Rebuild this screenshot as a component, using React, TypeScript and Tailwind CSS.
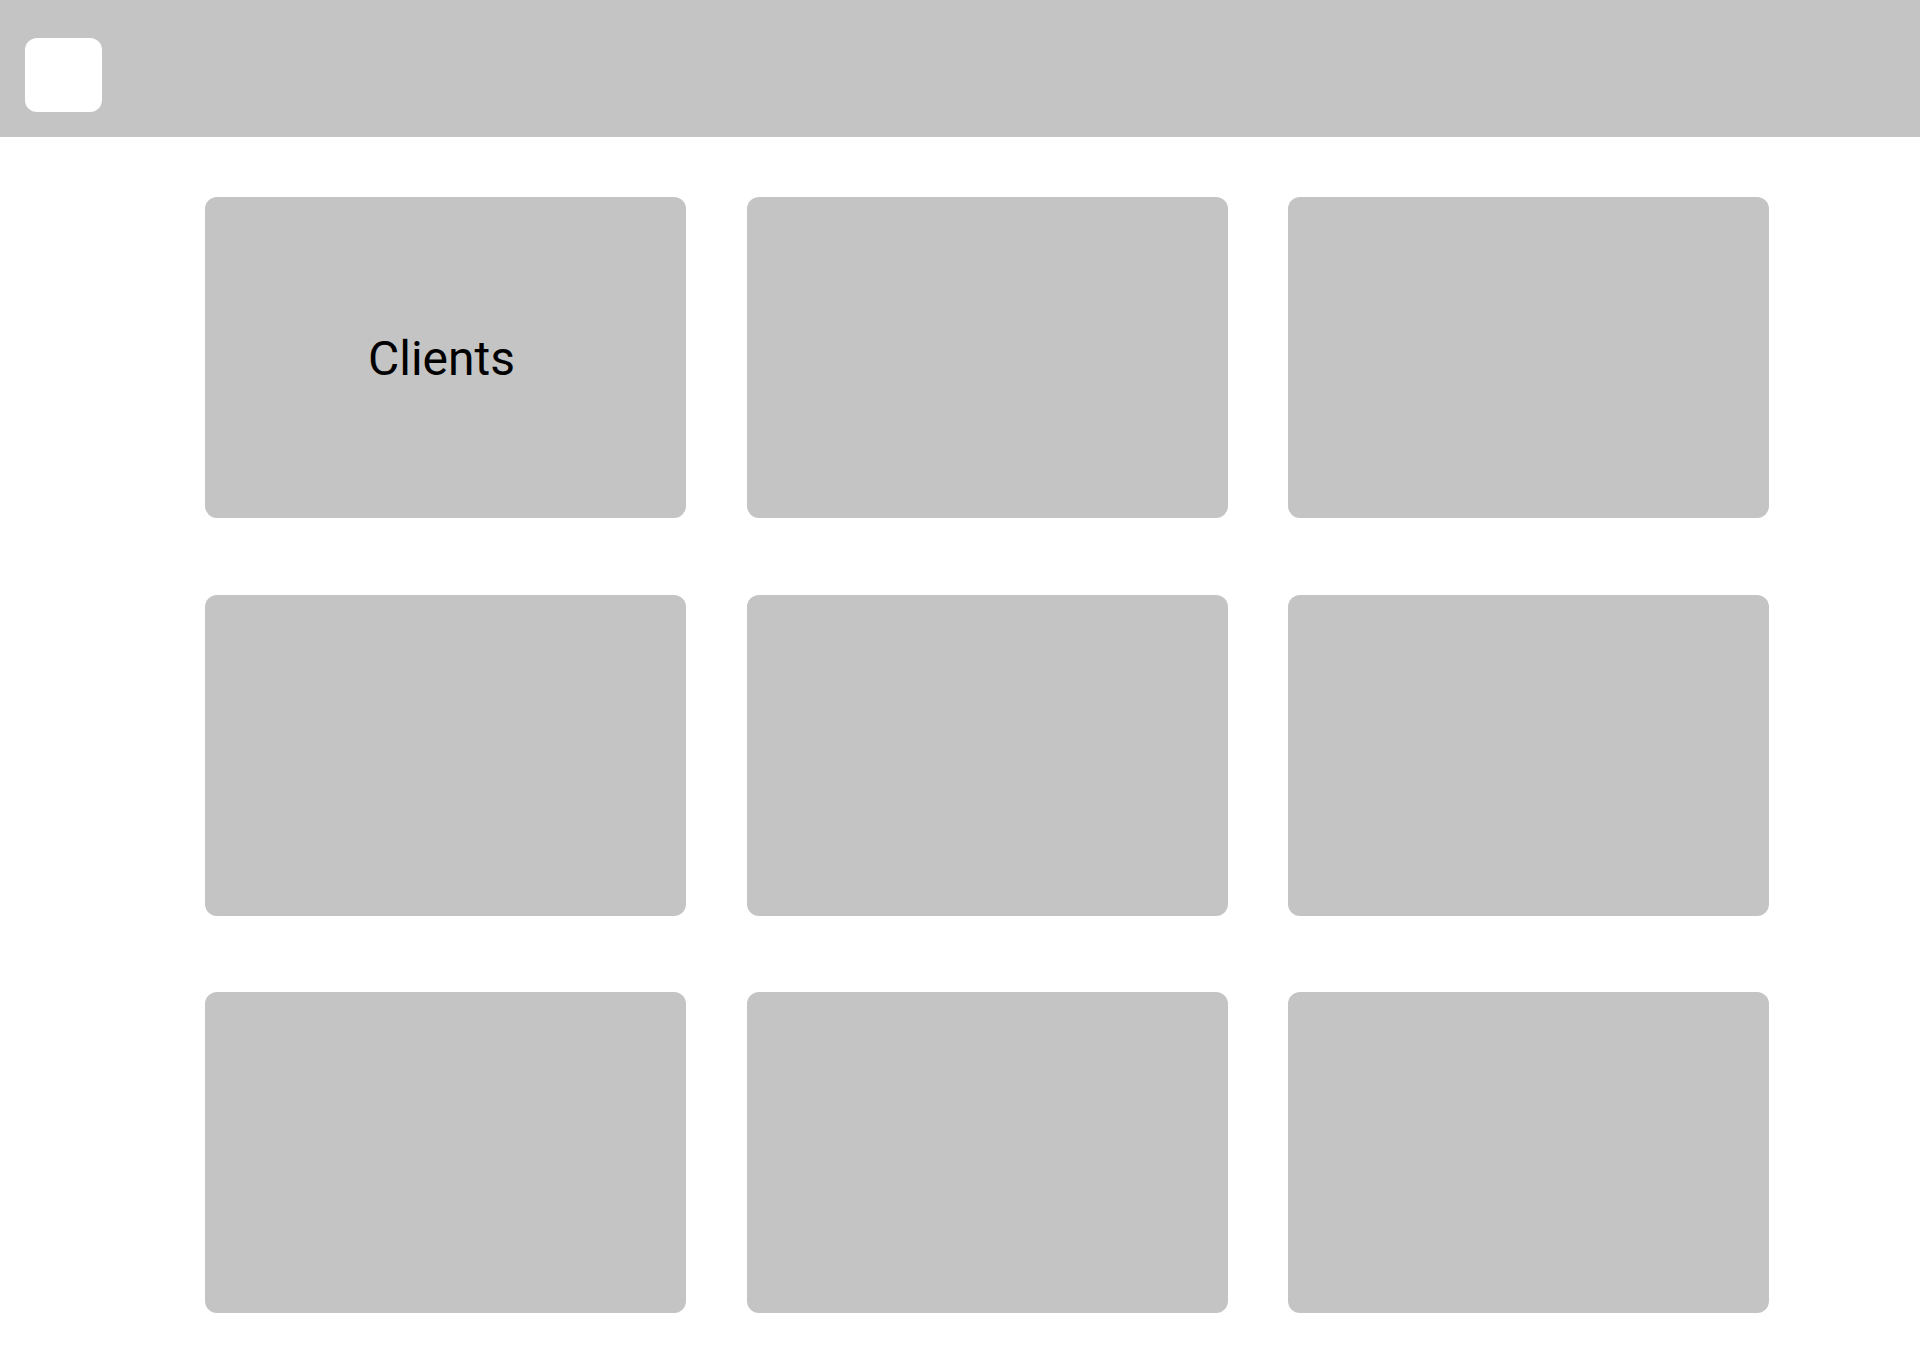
export default function App() {
    const tiles = ['Clients', '', '', '', '', '', '', '', ''];

    return (
        <div className="min-h-[1365px] bg-white" style={{ fontFamily: 'Roboto, "Liberation Sans", sans-serif' }}>
            {/* Top bar */}
            <header className="h-[137px] bg-[#c4c4c4] pl-[25px] pt-[38px]">
                <div className="w-[77px] h-[74px] rounded-[12px] bg-white" />
            </header>

            {/* Tiles */}
            <main className="pt-[60px] pl-[205px]">
                <div className="grid grid-cols-[repeat(3,481px)] auto-rows-[321px] gap-x-[60.5px] gap-y-[76.5px]">
                    {tiles.map((label, i) => (
                        <div
                            key={i}
                            className="rounded-[12px] bg-[#c4c4c4] flex items-center justify-center pr-[8px] pt-[2px]"
                        >
                            {label && <span className="text-[48px] leading-none text-black">{label}</span>}
                        </div>
                    ))}
                </div>
            </main>
        </div>
    );
}
